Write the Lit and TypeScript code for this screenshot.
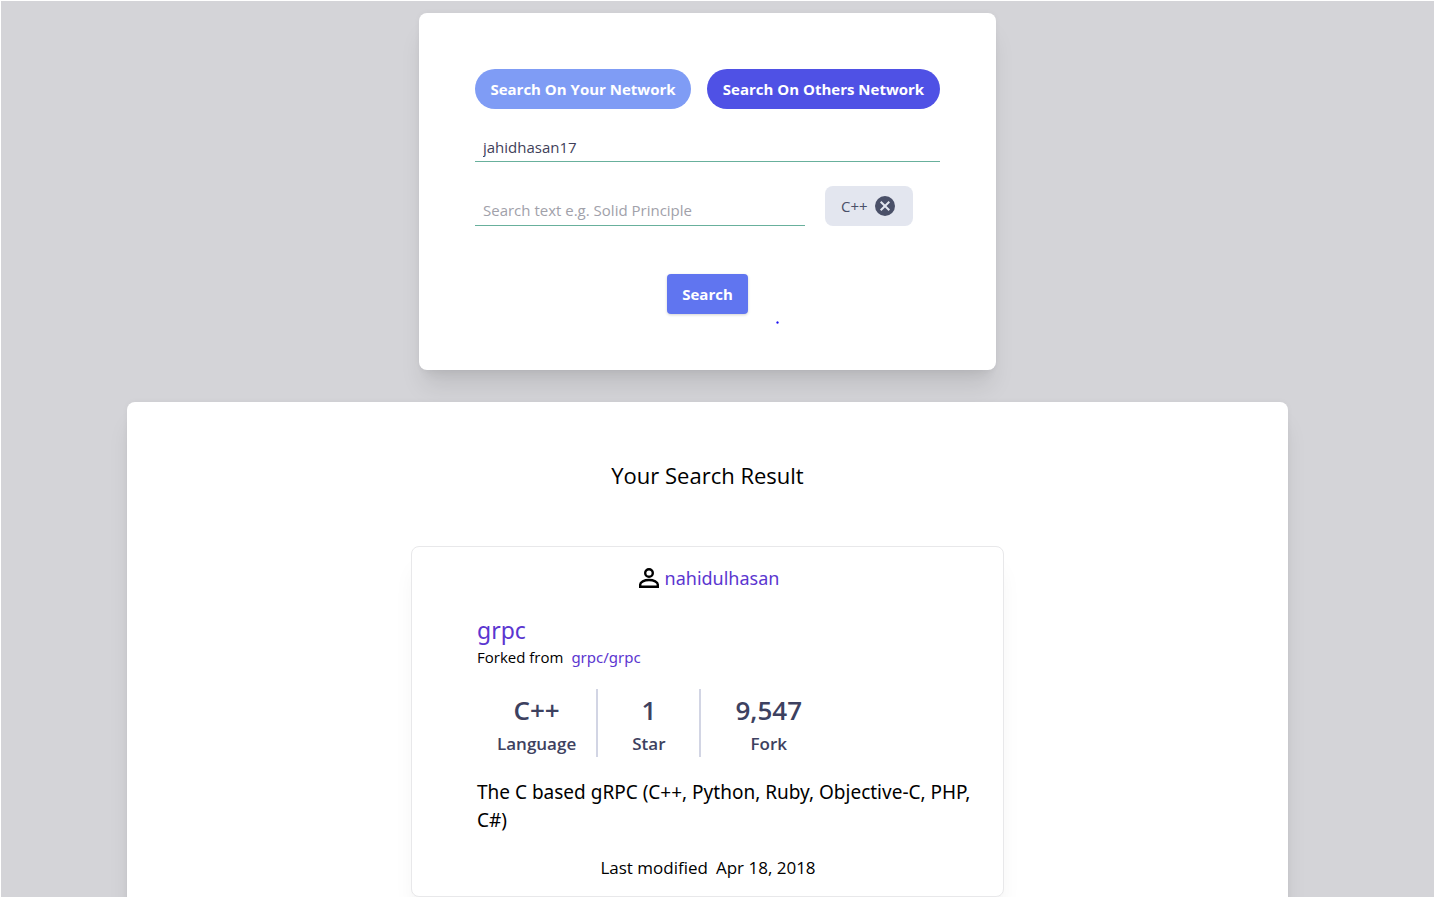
import { LitElement, html, css } from "lit";
import { customElement, property, state } from "lit/decorators.js";

interface Repo {
  owner: string;
  name: string;
  parent: string;
  language: string;
  stars: number;
  forks: number;
  description: string;
  modified: string;
}

@customElement("repo-card")
class RepoCard extends LitElement {
  static styles = css`
    :host {
      display: block;
      box-sizing: border-box;
      width: 593px;
      max-width: 100%;
      padding: 16px 20px 14px 65px;
      border: 1px solid #e8e8ea;
      border-radius: 8px;
      background: #fff;
      box-shadow: 0 20px 25px -5px rgba(0, 0, 0, 0.06), 0 8px 10px -6px rgba(0, 0, 0, 0.04);
    }
    a {
      color: #5b36d0;
      font-family: "Noto Sans", sans-serif;
      text-decoration: none;
    }
    .owner,
    .modified {
      display: flex;
      justify-content: center;
      align-items: center;
      margin-right: 44px;
    }
    .owner {
      gap: 4px;
      font-size: 18px;
      line-height: 30px;
    }
    .owner svg {
      width: 24px;
      height: 24px;
    }
    .name {
      margin: 22px 0 2px;
      font-size: 23px;
      font-weight: 400;
      line-height: 30px;
    }
    .forked {
      display: flex;
      gap: 8px;
      margin: 0;
      font-size: 15px;
      line-height: 20px;
    }
    .stats {
      display: flex;
      margin: 22px 0 0;
      color: #3d4160;
      font-weight: 600;
    }
    .stat {
      display: flex;
      flex-direction: column-reverse;
      align-items: center;
      padding: 0 20px;
    }
    .stat + .stat {
      border-left: 2px solid #d2d5e4;
      padding: 0 34px;
    }
    .stat dd {
      margin: 0;
      font-size: 26px;
      line-height: 42px;
    }
    .stat dt {
      font-size: 17px;
      line-height: 26px;
    }
    .description {
      margin: 21px 0 0;
      font-family: "Noto Sans", sans-serif;
      font-size: 19px;
      line-height: 28px;
    }
    .modified {
      gap: 8px;
      margin-top: 20px;
      font-size: 17px;
      line-height: 28px;
    }
  `;

  @property({ attribute: false }) repo!: Repo;

  render() {
    const r = this.repo;
    const stats: [string, string][] = [
      ["Language", r.language],
      ["Star", r.stars.toLocaleString("en-US")],
      ["Fork", r.forks.toLocaleString("en-US")],
    ];
    return html`
      <div class="owner">
        <svg viewBox="0 0 24 24" fill="none" stroke="#000" stroke-width="2.400" aria-hidden="true">
          <circle cx="12" cy="7" r="3.800" />
          <path d="M3.200 20.800v-2.300c0-2.500 4-4.500 8.800-4.500s8.800 2 8.800 4.500v2.300z" />
        </svg>
        <a href="#${r.owner}">${r.owner}</a>
      </div>
      <h2 class="name"><a href="#${r.name}">${r.name}</a></h2>
      <p class="forked"><span>Forked from</span><a href="#${r.parent}">${r.parent}</a></p>
      <dl class="stats">
        ${stats.map(([label, value]) => html`<div class="stat"><dt>${label}</dt><dd>${value}</dd></div>`)}
      </dl>
      <p class="description">${r.description}</p>
      <div class="modified"><span>Last modified</span><time>${r.modified}</time></div>
    `;
  }
}

@customElement("app-root")
class AppRoot extends LitElement {
  static styles = css`
    :host {
      display: block;
      box-sizing: border-box;
      height: 100vh;
      padding: 1px;
      background: #fff;
      color: #000;
      font-family: "Open Sans", "Noto Sans", sans-serif;
    }
    .page {
      box-sizing: border-box;
      height: 100%;
      overflow: hidden;
      padding: 12px 20px 0 0;
      background: #d4d4d8;
    }
    .panel {
      border-radius: 8px;
      background: #fff;
      box-shadow: 0 20px 25px -5px rgba(0, 0, 0, 0.1), 0 10px 10px -5px rgba(0, 0, 0, 0.04),
        0 0 6px rgba(0, 0, 0, 0.04);
    }
    .search {
      display: flex;
      flex-direction: column;
      box-sizing: border-box;
      width: 577px;
      max-width: 100%;
      margin: 0 auto 32px;
      padding: 56px;
    }
    button {
      border: 0;
      font-family: inherit;
      cursor: pointer;
    }
    .modes {
      display: flex;
      gap: 16px;
    }
    .mode,
    .submit {
      height: 40px;
      padding: 0;
      color: #fff;
      font-size: 15px;
      font-weight: 700;
      white-space: nowrap;
    }
    .mode {
      flex: 216 1 0;
      border-radius: 20px;
      background: #7f9cf5;
    }
    .mode.active {
      flex-grow: 233;
      background: #4f51e5;
    }
    .field {
      box-sizing: border-box;
      width: 100%;
      height: 30px;
      padding: 0 8px;
      border: 0;
      border-bottom: 1px solid #68b09c;
      border-radius: 0;
      outline: 0;
      background: transparent;
      color: #3f3f5a;
      font-family: inherit;
      font-size: 15px;
      line-height: 28px;
    }
    .field::placeholder {
      color: #a1a1aa;
      opacity: 1;
    }
    .user {
      margin-top: 23px;
    }
    .filters {
      display: flex;
      align-items: flex-end;
      gap: 20px;
      margin-top: 24px;
    }
    .query {
      flex: 1;
      height: 32px;
    }
    .chip {
      display: flex;
      align-items: center;
      justify-content: space-between;
      width: 88px;
      height: 40px;
      margin-right: 27px;
      padding: 0 16px;
      border-radius: 8px;
      background: #e3e6ef;
      color: #4a5068;
      font-size: 15px;
      font-weight: 400;
    }
    .chip svg {
      width: 24px;
      height: 24px;
    }
    .actions {
      position: relative;
      align-self: center;
      margin-top: 48px;
    }
    .submit {
      display: block;
      width: 81px;
      border-radius: 4px;
      background: #6075f0;
      box-shadow: 0 1px 3px rgba(0, 0, 0, 0.18);
    }
    .speck {
      position: absolute;
      top: 47px;
      left: 109px;
      width: 3px;
      height: 3px;
      border-radius: 2px;
      background: radial-gradient(circle, #1a10f0 30%, #b9b4ff 70%);
    }
    .results {
      display: flex;
      flex-direction: column;
      align-items: center;
      margin: 0 126px;
      padding: 56px 56px 80px;
    }
    .title {
      margin: 0 0 54px;
      font-size: 22px;
      font-weight: 400;
      line-height: 34px;
    }
  `;

  @state() private others = true;
  @state() private language = "C++";

  private repo: Repo = {
    owner: "nahidulhasan",
    name: "grpc",
    parent: "grpc/grpc",
    language: "C++",
    stars: 1,
    forks: 9547,
    description: "The C based gRPC (C++, Python, Ruby, Objective-C, PHP, C#)",
    modified: "Apr 18, 2018",
  };

  render() {
    return html`
      <main class="page">
        <form class="panel search" @submit=${(e: Event) => e.preventDefault()}>
          <div class="modes">
            <button type="button" class="mode" @click=${() => (this.others = false)}>Search On Your Network</button>
            <button type="button" class="mode active" @click=${() => (this.others = true)}>Search On Others Network</button>
          </div>
          <input class="field user" aria-label="Username" .value=${"jahidhasan17"} ?disabled=${!this.others} />
          <div class="filters">
            <input class="field query" aria-label="Search text" placeholder="Search text e.g. Solid Principle" />
            ${this.language
              ? html`<button type="button" class="chip" @click=${() => (this.language = "")}>
                  <span>${this.language}</span>
                  <svg viewBox="0 0 24 24" aria-hidden="true">
                    <circle cx="12" cy="12" r="10" fill="#4a5068" />
                    <path d="M7.700 7.700l8.600 8.600M16.300 7.700l-8.600 8.600" stroke="#e3e6ef" stroke-width="2" />
                  </svg>
                </button>`
              : ""}
          </div>
          <div class="actions">
            <button type="submit" class="submit">Search</button>
            <span class="speck"></span>
          </div>
        </form>
        <section class="panel results">
          <h1 class="title">Your Search Result</h1>
          <repo-card .repo=${this.repo}></repo-card>
        </section>
      </main>
    `;
  }
}
